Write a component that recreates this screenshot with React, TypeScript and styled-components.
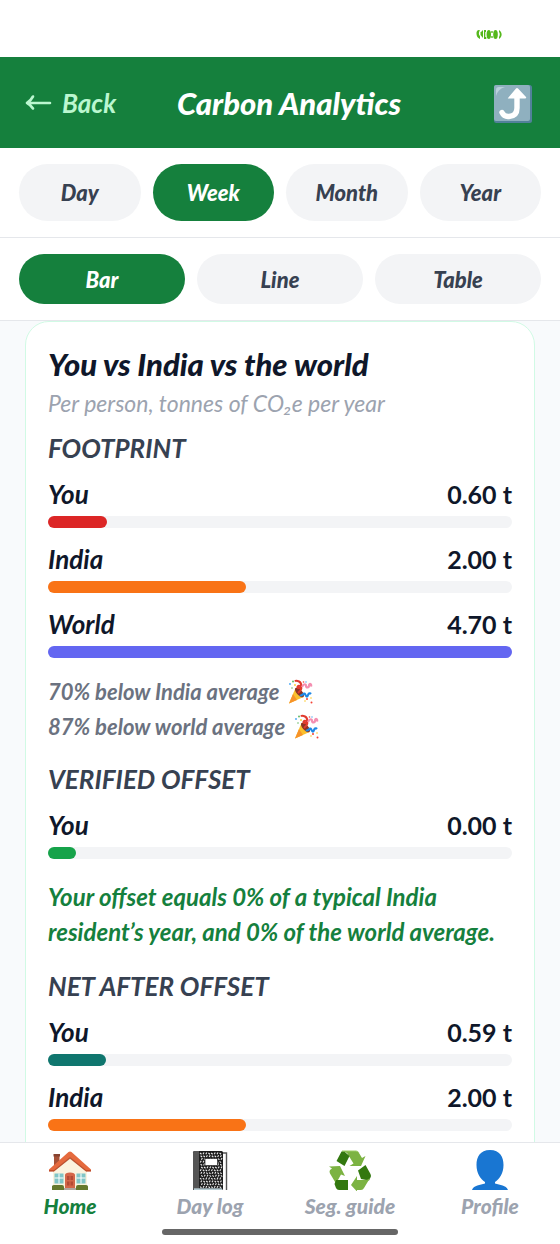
import React, { useState } from 'react';
import styled, { createGlobalStyle } from 'styled-components';

const GlobalStyle = createGlobalStyle`
  * { box-sizing: border-box; }
  body { margin: 0; background: #fff; }
  button { font: inherit; border: 0; cursor: pointer; }
  h1, h2, h3, p { margin: 0; }
`;

const Screen = styled.div`
  display: flex;
  flex-direction: column;
  height: 100vh;
  background: #f8fafc;
  font-family: Lato, 'Liberation Sans', sans-serif;
  font-style: italic;
  color: #0f172a;
`;

const StatusBar = styled.div`
  display: flex;
  justify-content: flex-end;
  align-items: center;
  flex: none;
  height: 57px;
  padding: 12px 58px 0 0;
  background: #fff;
`;

const Header = styled.header`
  display: flex;
  align-items: center;
  justify-content: space-between;
  flex: none;
  height: 91px;
  padding: 0 26px 0 25px;
  background: #15803d;
`;

const BackButton = styled.button`
  display: flex;
  align-items: center;
  gap: 10px;
  padding: 0;
  background: none;
  color: #bbf7d0;
  font-size: 26px;
  font-weight: 700;
  line-height: 32px;
`;

const PageTitle = styled.h1`
  color: #fff;
  font-size: 31px;
  font-weight: 900;
  line-height: 40px;
`;

const ShareButton = styled.button`
  display: flex;
  justify-content: flex-end;
  width: 72px;
  padding: 0;
  background: none;
`;

const PillBar = styled.div`
  display: flex;
  flex: none;
  gap: 12px;
  padding: 16px 19px;
  background: #fff;
  border-bottom: 1px solid #e5e7eb;
`;

const Pill = styled.button<{ $active: boolean; $compact?: boolean }>`
  flex: 1 1 0;
  min-width: 0;
  height: ${p => (p.$compact ? 50 : 57)}px;
  padding: 0;
  border-radius: 29px;
  background: ${p => (p.$active ? '#15803d' : '#f3f4f6')};
  color: ${p => (p.$active ? '#fff' : '#374151')};
  font-size: 22px;
  font-weight: 900;
`;

const Content = styled.main`
  flex: 1 1 0;
  min-height: 0;
  overflow-y: auto;
  scrollbar-width: none;
  padding: 0 25px;
`;

const Card = styled.section`
  padding: 22px 22px 48px;
  background: #fff;
  border: 1px solid #d1fae5;
  border-radius: 24px;
`;

const CardTitle = styled.h2`
  font-size: 31px;
  font-weight: 900;
  line-height: 40px;
`;

const Subtitle = styled.p`
  padding-top: 4px;
  color: #9ca3af;
  font-size: 23px;
  line-height: 30px;
`;

const Group = styled.div<{ $space: number }>`
  display: flex;
  flex-direction: column;
  gap: 15px;
  padding-top: ${p => p.$space}px;
`;

const GroupTitle = styled.h3`
  color: #374151;
  font-size: 26px;
  font-weight: 700;
  line-height: 30px;
`;

const Metric = styled.div`
  display: flex;
  flex-direction: column;
  gap: 6px;
`;

const MetricHead = styled.div`
  display: flex;
  justify-content: space-between;
  font-size: 26px;
  font-weight: 700;
  line-height: 32px;
`;

const MetricValue = styled.span`
  font-size: 25px;
  font-style: normal;
`;

const Track = styled.div`
  height: 12px;
  border-radius: 6px;
  background: #f3f4f6;
`;

const Fill = styled.div<{ $color: string }>`
  height: 100%;
  border-radius: 6px;
  background: ${p => p.$color};
`;

const Notes = styled.div`
  padding-top: 1px;
`;

const Note = styled.p`
  display: flex;
  align-items: center;
  gap: 8px;
  color: #6b7280;
  font-size: 22px;
  font-weight: 700;
  line-height: 35px;
`;

const Verdict = styled.p`
  padding-top: 5px;
  color: #15803d;
  font-size: 24px;
  font-weight: 700;
  line-height: 35px;
`;

const TabBar = styled.nav`
  display: flex;
  flex: none;
  background: #fff;
  border-top: 1px solid #e5e7eb;
  padding-top: 7px;
`;

const Tab = styled.a<{ $active?: boolean }>`
  display: flex;
  flex: 1 1 0;
  flex-direction: column;
  align-items: center;
  color: ${p => (p.$active ? '#15803d' : '#9ca3af')};
  font-size: 21px;
  font-weight: 900;
  line-height: 30px;
  text-decoration: none;
`;

const HomeIndicatorArea = styled.div`
  display: flex;
  flex: none;
  justify-content: center;
  padding: 8px 0 9px;
  background: #fff;
`;

const HomeIndicator = styled.div`
  width: 42%;
  height: 6px;
  border-radius: 3px;
  background: #666;
`;

const StatusGlyph = () => (
  <svg width="26" height="11" viewBox="0 0 26 11" fill="#55b81c" aria-hidden="true">
    <path d="M3 1C1 1 .3 3 .5 5s1 4 3.500 5V7C2.500 6 2.500 3 4 1.500z" />
    <path d="M4.500 3.500l2.500-2.500v8L4.500 6z" />
    <path d="M8 1h2v2H9.300v5h1v2H8z" />
    <ellipse cx="12.800" cy="5.500" rx="2.200" ry="4.500" />
    <circle cx="16" cy="3" r=".9" /><circle cx="16" cy="8" r=".9" />
    <ellipse cx="19.500" cy="5.500" rx="2.300" ry="4.500" />
    <path d="M23 1c3.500 2 3.500 7 0 9V8c1-2 1-4 0-5z" />
  </svg>
);

const ArrowLeft = () => (
  <svg width="27" height="18" viewBox="0 0 27 18" fill="none" stroke="currentColor" strokeWidth="2.6" strokeLinecap="round" strokeLinejoin="round" aria-hidden="true">
    <path d="M2 9h23M8 2.5Q5.500 7 2 9q4 2 6 5.500" />
  </svg>
);

const ShareIcon = () => (
  <svg width="42" height="42" viewBox="0 0 42 42" aria-hidden="true">
    <rect x="2" y="3" width="38" height="38" rx="2.500" fill="#52819a" />
    <rect x="2" y="3" width="36" height="36" rx="2" fill="#8fb0bf" />
    <path d="M4 14V8q0-3 3-3h6Q6 7 4 14z" fill="#b9d0db" />
    <path d="M10 30.500q2 4.500 7 4 8-.500 8-8.500V14" fill="none" stroke="#fff" strokeWidth="5.400" strokeLinecap="round" />
    <path d="M16 16L24 6.500q1-1.200 2 0l8 8.500q.800 1.500-1 1.500H17q-1.800 0-1-.500z" fill="#fff" />
  </svg>
);

const PartyIcon = () => (
  <svg width="26" height="26" viewBox="0 0 26 26" fill="none" aria-hidden="true">
    <path d="M2 24.500L8.500 9q5 2 8 9z" fill="#fbc02d" />
    <path d="M2 24.500L6 15l4 6z" fill="#f79329" />
    <ellipse cx="12.500" cy="13.500" rx="2.800" ry="6" transform="rotate(-42 12.500 13.500)" fill="#8c3325" />
    <path d="M11 14c4-3 4-6 2-7s-4 2-1 2 3-5 0-6.500-4 0-4 0" stroke="#e13a2e" strokeWidth="2" />
    <path d="M15 8c2-4 4-3 4-1s3 2 3-.500 3-2 2 1" stroke="#f48fb1" strokeWidth="2.200" />
    <path d="M13 16c2 2 4-3 5-1s2 4 3 1 3-1 3-1" stroke="#1e88e5" strokeWidth="2.200" />
    <g fill="#42a5f5"><circle cx="3" cy="5" r=".9" /><circle cx="19" cy="3" r=".7" /></g>
    <g fill="#66bb6a"><circle cx="6" cy="2.500" r="1" /><circle cx="5" cy="9" r=".8" /></g>
    <g fill="#f44336"><circle cx="20" cy="20" r="1" /><circle cx="24.500" cy="23.500" r="1" /><circle cx="16.500" cy="3" r=".8" /></g>
    <g fill="#ffca28"><circle cx="8" cy="6" r=".9" /><circle cx="24" cy="19" r=".8" /><circle cx="18" cy="22" r=".8" /></g>
  </svg>
);

const HomeIcon = () => (
  <svg width="44" height="41" viewBox="0 0 44 41" aria-hidden="true">
    <path d="M6 5h5.500v12L6 20z" fill="#a65137" /><path d="M5.500 4h6.500v2.500H5.500z" fill="#86422f" />
    <path d="M5 19L22 5l17 14v20H5z" fill="#fbf3df" />
    <path d="M5 20l17-13 17 13v2L22 9 5 22z" fill="#c9b99f" />
    <path d="M1 19.500L20.500 2q1.500-1 3 0L43 19.500v1.800h-4L22 7.500 5 21.300H1z" fill="#e56a3e" />
    <path d="M1 20h5L22 7l16 13h5v1.500h-5L22 8.500 6 21.500H1z" fill="#bf4d2c" />
    <rect x="6.500" y="23.500" width="9" height="10" fill="#80c5c7" /><rect x="28.500" y="23.500" width="9" height="10" fill="#80c5c7" />
    <path d="M11 23.500v10M6.500 28h9M33 23.500v10M28.500 28h9" stroke="#fff" strokeWidth="1" />
    <path d="M17 38V25q0-2.500 5-2.500t5 2.500v13z" fill="#d46649" />
    <path d="M19 26h2.500v4H19zM22.500 26H25v4h-2.500zM19 31.500h2.500v4H19zM22.500 31.500H25v4h-2.500z" fill="#b44a35" />
    <path d="M16 38h12v2H16z" fill="#b0a79f" />
    <path d="M4 40v-4q1-1.500 3-1h7q2 0 2 2v3zM28 40v-3q0-2 2-2h7q3-.500 3 1.500V40z" fill="#66792d" />
  </svg>
);

const NotebookIcon = () => {
  const specks: [number, number][] = [];
  for (let r = 0; r < 13; r++) for (let c = 0; c < 8; c++) specks.push([c, r]);
  return (
    <svg width="44" height="41" viewBox="0 0 44 41" aria-hidden="true">
      <path d="M34 3h4.500v37" stroke="#555" strokeWidth="1.400" fill="none" />
      <rect x="5" y="1" width="30" height="39" rx="1.500" fill="#1c1c1c" />
      <path d="M6.500 1H11v39H5V2.500Q5 1 6.500 1z" fill="#555" />
      <path d="M6 38.300h28V40H6z" fill="#b7ccd3" />
      <g stroke="#eee" strokeWidth="1.100">
        {specks.map(([c, r]) => {
          const x = 12 + c * 2.8 + ((r * 7) % 3) * 0.6;
          const y = 3 + r * 2.8;
          return <path key={`${c}-${r}`} d={(c * 3 + r * 5) % 4 < 2 ? `M${x} ${y}l1.500 1.200` : `M${x + 1.2} ${y - 0.6}l-1 1.800`} />;
        })}
      </g>
      <rect x="17" y="8.500" width="12.500" height="7" fill="#fff" stroke="#222" strokeWidth=".7" />
    </svg>
  );
};

const RecycleIcon = () => (
  <svg width="44" height="41" viewBox="0 0 44 41" aria-hidden="true">
    <path d="M14 1h14q2 0 3 2l3 5 3.500-2-4.500 10H21.500l4-2.500L19 3z" fill="#7cb342" />
    <path d="M13.500 1.500Q16 .5 18 3l3.500 3-5 10-8-5z" fill="#33780f" />
    <path d="M1 16.500l11-.5 5 10-4-1.500-5 9-6-10q-1-2 0-3.500l2-1.500z" fill="#7cb342" />
    <path d="M8 30h12v10H11q-2 0-3-2l-1.500-4z" fill="#33780f" />
    <path d="M37.500 15l5 9q1 2 0 3.500l-1.500 3-8-1.500-3-8.500z" fill="#33780f" />
    <path d="M42 28l-6 10q-1 2-3 2h-4v1.500l-6-6.500 6-9v4h8q3 0 5-2z" fill="#7cb342" />
    <path d="M14 1h14q2 0 3 2" fill="none" stroke="#9ccc65" strokeWidth="1" />
  </svg>
);

const PersonIcon = () => (
  <svg width="44" height="41" viewBox="0 0 44 41" fill="#1976d2" aria-hidden="true">
    <path d="M22 0c10 0 13.500 7 13.500 15 0 8.500-4 14-8.500 17v1.500c5 1.500 11 1.500 13 6.500H4c2-5 8-5 13-6.500V32C12.500 29 8.500 23.500 8.500 15 8.500 7 12 0 22 0z" />
  </svg>
);

type RowProps = { label: string; value: string; width: number; color: string };

const MetricRow = ({ label, value, width, color }: RowProps) => (
  <Metric>
    <MetricHead>
      <span>{label}</span>
      <MetricValue>{value}</MetricValue>
    </MetricHead>
    <Track>
      <Fill $color={color} style={{ width: `${width}%` }} />
    </Track>
  </Metric>
);

const tabs = [
  { label: 'Home', Icon: HomeIcon },
  { label: 'Day log', Icon: NotebookIcon },
  { label: 'Seg. guide', Icon: RecycleIcon },
  { label: 'Profile', Icon: PersonIcon },
];

export default function App() {
  const [period, setPeriod] = useState('Week');
  const [view, setView] = useState('Bar');
  return (
    <Screen>
      <GlobalStyle />
      <StatusBar><StatusGlyph /></StatusBar>
      <Header>
        <BackButton><ArrowLeft />Back</BackButton>
        <PageTitle>Carbon Analytics</PageTitle>
        <ShareButton aria-label="Share"><ShareIcon /></ShareButton>
      </Header>
      <PillBar>
        {['Day', 'Week', 'Month', 'Year'].map(p => (
          <Pill key={p} $active={p === period} aria-pressed={p === period} onClick={() => setPeriod(p)}>{p}</Pill>
        ))}
      </PillBar>
      <PillBar>
        {['Bar', 'Line', 'Table'].map(v => (
          <Pill key={v} $compact $active={v === view} aria-pressed={v === view} onClick={() => setView(v)}>{v}</Pill>
        ))}
      </PillBar>
      <Content>
        <Card>
          <CardTitle>You vs India vs the world</CardTitle>
          <Subtitle>Per person, tonnes of CO₂e per year</Subtitle>
          <Group $space={15}>
            <GroupTitle>FOOTPRINT</GroupTitle>
            <MetricRow label="You" value="0.60 t" width={12.8} color="#dc2626" />
            <MetricRow label="India" value="2.00 t" width={42.6} color="#f97316" />
            <MetricRow label="World" value="4.70 t" width={100} color="#6366f1" />
            <Notes>
              <Note>70% below India average <PartyIcon /></Note>
              <Note>87% below world average <PartyIcon /></Note>
            </Notes>
          </Group>
          <Group $space={20}>
            <GroupTitle>VERIFIED OFFSET</GroupTitle>
            <MetricRow label="You" value="0.00 t" width={6} color="#16a34a" />
            <Verdict>Your offset equals 0% of a typical India resident’s year, and 0% of the world average.</Verdict>
          </Group>
          <Group $space={22}>
            <GroupTitle>NET AFTER OFFSET</GroupTitle>
            <MetricRow label="You" value="0.59 t" width={12.6} color="#0f766e" />
            <MetricRow label="India" value="2.00 t" width={42.6} color="#f97316" />
          </Group>
        </Card>
      </Content>
      <TabBar>
        {tabs.map(({ label, Icon }) => (
          <Tab key={label} href="#" $active={label === 'Home'}><Icon />{label}</Tab>
        ))}
      </TabBar>
      <HomeIndicatorArea><HomeIndicator /></HomeIndicatorArea>
    </Screen>
  );
}
